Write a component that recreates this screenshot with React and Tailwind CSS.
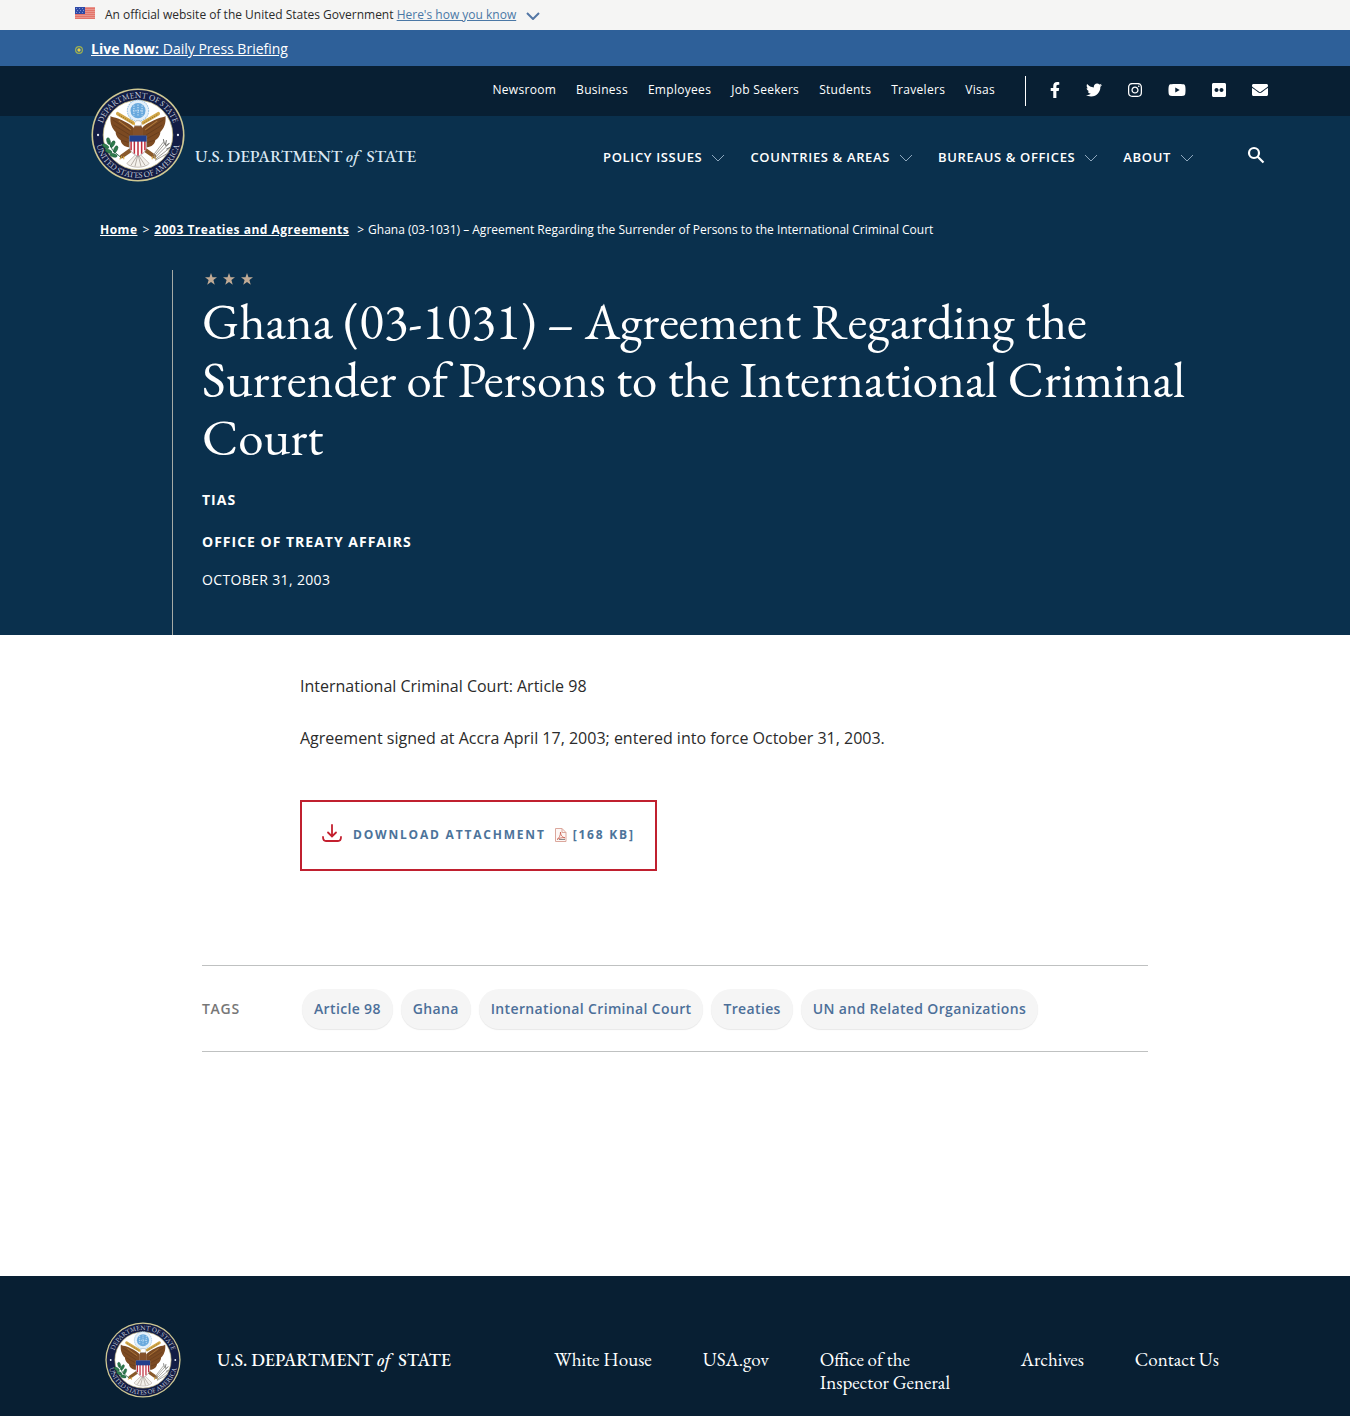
import React from "react";
import {
  FaFacebookF,
  FaTwitter,
  FaInstagram,
  FaYoutube,
  FaFlickr,
  FaEnvelope,
} from "react-icons/fa";

const SERIF = "font-['EB_Garamond','Liberation_Serif',serif]";

function Flag() {
  return (
    <svg viewBox="0 0 20 12" className="mb-1 h-3 w-5 shrink-0" aria-hidden="true">
      <rect width="20" height="12" fill="#f6e6e4" />
      {[0, 2, 4, 6, 8, 10].map((y) => (
        <rect key={y} y={y + 0.5} width="20" height="1.2" fill="#dc4436" />
      ))}
      <rect width="10" height="7" fill="#2f4aa6" />
      {[1, 3, 5].map((y) =>
        [1, 4, 7].map((x) => (
          <rect key={`${x}-${y}`} x={x + (y === 3 ? 1 : 0)} y={y} width="1" height="1" fill="#8193d2" />
        ))
      )}
    </svg>
  );
}

function Chevron({ className }) {
  return (
    <svg viewBox="0 0 14 8" className={className} fill="none" stroke="currentColor" aria-hidden="true">
      <path d="M1 1l6 6 6-6" />
    </svg>
  );
}

function Wing() {
  return (
    <g>
      <path
        d="M46 44C41 39 35 37 31 35C27 33 24 34 23 32C22 40 25 45 28 48C28 52 31 55 33 56C33 60 37 63 41 63L46 61Z"
        fill="#7c4a22"
      />
      <path
        d="M25 36L42 47M26 41L42 51M29 48L42 55M33 56L43 59"
        stroke="#5d371a"
        strokeWidth="0.6"
        fill="none"
      />
      <path d="M31 37L43 46" stroke="#b07a3c" strokeWidth="1" />
    </g>
  );
}

function Seal({ id, className }) {
  return (
    <svg viewBox="0 0 100 100" className={className} role="img" aria-label="Department of State seal">
      <defs>
        <path id={`${id}-top`} d="M10.500 50A39.500 39.500 0 0 1 89.500 50" />
        <path id={`${id}-bottom`} d="M4.500 50A45.500 45.500 0 0 0 95.500 50" />
      </defs>
      <circle cx="50" cy="50" r="49.500" fill="#cfc893" />
      <circle cx="50" cy="50" r="47.800" fill="#131d45" />
      <circle cx="50" cy="50" r="37" fill="#fff" stroke="#cbbd83" strokeWidth="0.8" />
      <g fill="#c9d1de" fontSize="8.800" fontFamily="'EB Garamond', 'Liberation Serif', serif" textAnchor="middle">
        <text>
          <textPath href={`#${id}-top`} startOffset="50%">DEPARTMENT OF STATE</textPath>
        </text>
        <text>
          <textPath href={`#${id}-bottom`} startOffset="50%">UNITED STATES OF AMERICA</textPath>
        </text>
      </g>
      <circle cx="7.500" cy="50" r="1.200" fill="#e8edf5" />
      <circle cx="92.500" cy="50" r="1.200" fill="#e8edf5" />

      <g transform="translate(50 50) scale(1.080) translate(-50 -51)">
        <circle cx="50" cy="27" r="10.500" fill="#e4f0fa" stroke="#9cc4e6" strokeWidth="1" strokeDasharray="1.6 0.8" />
        <circle cx="50" cy="27" r="7.400" fill="#69a9dd" />
        <path d="M46 22v10M50 21v12M54 22v10M45 27h10" stroke="#d8ebfa" strokeWidth="1" strokeDasharray="1.2 1.2" />

        <path d="M30 30L45 39M70 30L55 39" stroke="#d2a748" strokeWidth="3.400" strokeLinecap="round" />
        <path d="M31 31L45 39.500M69 31L55 39.500" stroke="#8a672a" strokeWidth="0.8" strokeDasharray="1.4 1" />

        <Wing />
        <g transform="matrix(-1 0 0 1 100 0)">
          <Wing />
        </g>

        <path d="M46 53C45 46 46 42 48 40L52 40C54 42 55 46 54 53Z" fill="#845029" />
        <path d="M46.500 42C46 38 48 36.500 51 37C54 37.400 54 40 52.500 42Z" fill="#fff" stroke="#a9a99f" strokeWidth="0.6" />
        <path d="M46.800 38.600L43.800 40.400L47 41Z" fill="#e0a82d" />

        <path d="M44 65L34 72M56 65L66 72" stroke="#8a5a2b" strokeWidth="4" strokeLinecap="round" />
        <path d="M39 79L50 68L61 79C57 84 43 84 39 79Z" fill="#f4f1ec" stroke="#a59c94" strokeWidth="0.6" />
        <path d="M43 81L50 70M47 82L50 70M53 82L50 70M57 81L50 70" stroke="#a59c94" strokeWidth="0.8" />
        <path d="M34 72l-2 3M36 72v3M66 72l2 3M64 72v3" stroke="#dfa93a" strokeWidth="1" />

        <g fill="#2e7b4c" stroke="#175536" strokeWidth="0.5">
          <ellipse cx="21" cy="57" rx="1.7" ry="3.4" transform="rotate(-15 21 57)" />
          <ellipse cx="18" cy="62" rx="1.7" ry="3.6" transform="rotate(-60 18 62)" />
          <ellipse cx="25" cy="60" rx="1.7" ry="3.6" transform="rotate(30 25 60)" />
          <ellipse cx="21" cy="67" rx="1.7" ry="3.6" transform="rotate(-65 21 67)" />
          <ellipse cx="28" cy="65" rx="1.7" ry="3.6" transform="rotate(25 28 65)" />
          <ellipse cx="26" cy="71" rx="1.7" ry="3.6" transform="rotate(-75 26 71)" />
        </g>
        <path d="M21 57L25 66L33 73" stroke="#175536" strokeWidth="0.8" fill="none" />

        <path
          d="M65 73L77 59M66 74L80 60M67 75L81 64M65 71L75 58M67 76L81 68"
          stroke="#98968f"
          strokeWidth="0.9"
        />
        <path d="M75 55l1 5M78 56l-1 5M81 59l-4 3M82 63l-4 2" stroke="#6f6f6c" strokeWidth="1" />

        <path d="M41.500 52h17v10c0 5-4 8-8.500 10c-4.500-2-8.500-5-8.500-10z" fill="#fff" stroke="#8f8f96" strokeWidth="0.6" />
        <path
          d="M43.200 57v9M46.400 57v12.500M50 57v14.500M53.600 57v12.500M56.800 57v9"
          stroke="#bf2c3d"
          strokeWidth="1.500"
        />
        <path d="M41.500 51.500h17v6h-17z" fill="#223f8c" />
      </g>
    </svg>
  );
}

function Wordmark({ className }) {
  return (
    <span className={`${SERIF} whitespace-nowrap font-medium ${className}`}>
      U.S. DEPARTMENT <i className="mr-1">of</i> STATE
    </span>
  );
}

function Star() {
  return (
    <svg viewBox="0 0 24 24" className="size-3" fill="#c0aa95" aria-hidden="true">
      <path d="M12 0l3 8.700h9l-7.200 5.500 2.700 9.300L12 18l-7.500 5.500 2.700-9.300L0 8.700h9z" />
    </svg>
  );
}

function DownloadIcon() {
  return (
    <svg viewBox="0 0 20 18" className="mb-1 h-[18px] w-5 shrink-0" fill="none" stroke="#c4202f" strokeWidth="1.800" strokeLinecap="round" aria-hidden="true">
      <path d="M10 1v11M6 8.500l4 4L14 8.500M1 13c0 3 1 4 3 4h12c2 0 3-1 3-4" />
    </svg>
  );
}

function PdfIcon() {
  return (
    <svg viewBox="0 0 13 14" className="ml-2 mr-1.5 h-3.5 w-[13px] shrink-0" fill="none" aria-hidden="true">
      <path d="M1.500 0.500h6.500l4 4v9h-10.500z" fill="#fdf7f5" stroke="#dba79c" />
      <path d="M8 0.500v4h4" stroke="#dba79c" />
      <path d="M3 11.500c2-1 3.500-4 3.500-7.500c0 3 1.500 5.500 4.500 5.800c-3-.4-5.500.2-8 1.700z" stroke="#c9604f" strokeWidth="0.8" />
      <path d="M5 11.500h6" stroke="#8a8a8a" />
    </svg>
  );
}

const topLinks = ["Newsroom", "Business", "Employees", "Job Seekers", "Students", "Travelers", "Visas"];
const mainLinks = ["Policy Issues", "Countries & Areas", "Bureaus & Offices", "About"];
const tags = ["Article 98", "Ghana", "International Criminal Court", "Treaties", "UN and Related Organizations"];
const social = [
  ["Facebook", FaFacebookF, "w-2.5"],
  ["Twitter", FaTwitter, "w-4"],
  ["Instagram", FaInstagram, "w-3.5"],
  ["YouTube", FaYoutube, "w-[18px]"],
  ["Flickr", FaFlickr, "w-3.5"],
  ["Email", FaEnvelope, "w-4"],
];

export default function App() {
  return (
    <div className="bg-white font-['Open_Sans',sans-serif] text-[#2b2b2b]">
      <div className="bg-[#f5f5f4]">
        <div className="mx-auto flex h-[30px] max-w-[1200px] items-center text-xs">
          <Flag />
          <p className="ml-2.5">
            An official website of the United States Government{" "}
            <button type="button" className="text-[#4a78a6] underline">Here's how you know</button>
          </p>
          <Chevron className="ml-2.5 mt-0.5 h-2 w-3.5 stroke-2 text-[#5477a5]" />
        </div>
      </div>

      <div className="bg-[#2e6099]">
        <div className="mx-auto flex h-9 max-w-[1200px] items-center pt-0.5 text-sm text-white">
          <svg viewBox="0 0 8 8" className="mt-0.5 size-2" fill="none" aria-hidden="true">
            <circle cx="4" cy="4" r="3.400" stroke="#9eb04f" strokeWidth="1.200" />
            <circle cx="4" cy="4" r="1.700" fill="#e5d04a" />
          </svg>
          <a href="#live" className="ml-2 underline"><b>Live Now:</b> Daily Press Briefing</a>
        </div>
      </div>

      <header className="bg-[#0a304d] text-white">
        <div className="bg-[#081f33]">
          <div className="mx-auto flex h-[50px] max-w-[1200px] items-center justify-end pr-[7px]">
            <nav aria-label="Audience" className="mb-0.5 flex gap-5 text-xs tracking-wide">
              {topLinks.map((t) => <a key={t} href="#top">{t}</a>)}
            </nav>
            <div className="ml-[30px] flex h-[30px] items-center gap-[26px] border-l border-white pb-0.5 pl-6">
              {social.map(([name, Icon, width]) => (
                <a key={name} href="#social" aria-label={name}><Icon className={`h-4 ${width}`} /></a>
              ))}
            </div>
          </div>
        </div>

        <div className="mx-auto flex h-[82px] max-w-[1200px] items-center justify-between pl-4 pr-2.5">
          <a href="#home" className="-mt-[44px] flex items-center gap-2.5">
            <Seal id="header" className="size-[94px]" />
            <Wordmark className="mt-11 text-[17px] text-[#dbe9f4]" />
          </a>
          <nav aria-label="Main" className="flex items-center gap-[25px] pt-0.5 text-[13px] font-semibold">
            {mainLinks.map((t) => (
              <button key={t} type="button" className="flex items-center gap-[9px] uppercase tracking-wider">
                {t}
                <Chevron className="h-2 w-3.5 text-[#8ea7bd]" />
              </button>
            ))}
            <button type="button" aria-label="Search" className="ml-7">
              <svg viewBox="0 0 18 18" className="mb-1.5 size-[18px]" fill="none" stroke="#fff" strokeWidth="2.200">
                <circle cx="7" cy="7" r="5" />
                <path d="M10.700 10.700L16.500 16.500" />
              </svg>
            </button>
          </nav>
        </div>

        <div className="mx-auto max-w-[1200px]">
          <nav aria-label="Breadcrumb" className="pl-[25px] pt-[23px] text-xs leading-[18px]">
            <a href="#home" className="font-bold tracking-[0.5px] underline">Home</a>
            <span className="mx-[5px]">&gt;</span>
            <a href="#treaties" className="font-bold tracking-[0.5px] underline">2003 Treaties and Agreements</a>
            <span className="ml-2 mr-1">&gt;</span>
            <span>Ghana (03-1031) – Agreement Regarding the Surrender of Persons to the International Criminal Court</span>
          </nav>
          <div className="ml-[97px] mt-[31px] border-l border-[#a5aaa6] pb-[45px] pl-[29px] pr-[70px]">
            <div className="flex gap-1.5 pl-[3px] pt-[3px]">
              <Star /><Star /><Star />
            </div>
            <h1 className={`${SERIF} mt-[7px] text-[51px] leading-[58px]`}>
              Ghana (03-1031) – Agreement Regarding the Surrender of Persons to the International Criminal Court
            </h1>
            <p className="mt-6 text-sm font-bold leading-5 tracking-[1px]">TIAS</p>
            <p className="mt-[22px] text-sm font-bold leading-5 tracking-[1px]">OFFICE OF TREATY AFFAIRS</p>
            <p className="mt-[18px] text-sm leading-5 tracking-wide">OCTOBER 31, 2003</p>
          </div>
        </div>
      </header>

      <main className="mx-auto max-w-[946px] pb-[224px] pt-[38px]">
        <div className="px-[98px] text-base leading-[26px]">
          <p>International Criminal Court: Article 98</p>
          <p className="mt-[26px]">Agreement signed at Accra April 17, 2003; entered into force October 31, 2003.</p>
          <a
            href="#download"
            className="mt-[49px] inline-flex h-[71px] items-center border-2 border-[#c0202f] px-5 pb-0.5 text-xs font-bold tracking-[1.8px] text-[#4c739a]"
          >
            <DownloadIcon />
            <span className="ml-[11px]">DOWNLOAD ATTACHMENT</span>
            <PdfIcon />
            <span>[168 KB]</span>
          </a>
        </div>
        <section className="mt-[94px] flex min-h-[87px] items-center border-y border-[#bfc1c1] text-sm">
          <h2 className="w-[100px] font-semibold tracking-wider text-[#777]">TAGS</h2>
          <ul className="flex flex-wrap gap-2 font-semibold text-[#4c6f99]">
            {tags.map((t) => (
              <li key={t}><a href="#tag" className="block rounded-[20px] bg-[#f5f5f5] px-3 py-2.5 tracking-wide shadow-[0_1px_1px_#e8e8e8]">{t}</a></li>
            ))}
          </ul>
        </section>
      </main>

      <footer className="bg-[#081f33] text-white">
        <div className="mx-auto flex h-[140px] max-w-[1200px] items-start pl-[30px] pt-[46px]">
          <Seal id="footer" className="size-[76px]" />
          <Wordmark className="ml-9 mt-6 text-[18px]" />
          <nav aria-label="Footer" className={`${SERIF} ml-auto mr-14 flex gap-[51px] pt-[26px] text-[19px] leading-[23px]`}>
            <a href="#wh">White House</a>
            <a href="#usa">USA.gov</a>
            <a href="#oig" className="w-[150px]">Office of the Inspector General</a>
            <a href="#arch">Archives</a>
            <a href="#contact">Contact Us</a>
          </nav>
        </div>
      </footer>
    </div>
  );
}
